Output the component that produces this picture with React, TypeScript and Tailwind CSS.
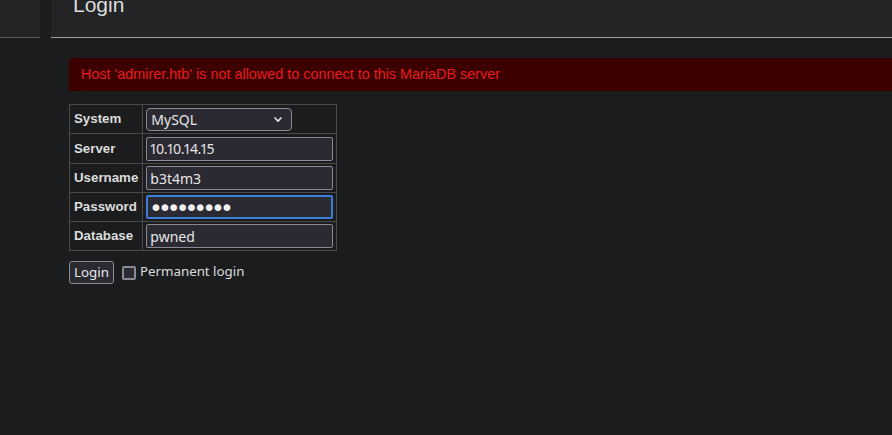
const rows: { label: string; value: string; focus?: boolean; tall?: boolean }[] = [
  { label: "Server", value: "10.10.14.15", tall: true },
  { label: "Username", value: "b3t4m3" },
  { label: "Password", value: "●●●●●●●●●", focus: true },
  { label: "Database", value: "pwned" },
];

const inputFont = { fontFamily: '"Noto Sans", "Open Sans", sans-serif' };

export default function App() {
  return (
    <div className="min-h-[435px] w-full bg-[#1b1c1e] text-[#dcdcdc]" style={{ fontFamily: '"Liberation Sans", Arial, sans-serif' }}>
      <div className="flex h-[38px]">
        <div className="w-[40px] bg-[#232426] border-b border-[#5a5a5a]" />
        <div className="w-[11px]" />
        <div className="flex-1 bg-[#232426] border-b border-[#a09d96] pl-[22px]">
          <h2 className="text-[21px] leading-none text-[#dcdcdc] -mt-[6px]">Login</h2>
        </div>
      </div>

      <div className="pl-[69px] pt-[20px]">
        <div className="h-[33px] bg-[#3d0000] flex items-center pl-[12px] text-[14.4px] text-[#e81c1c]">
          Host 'admirer.htb' is not allowed to connect to this MariaDB server
        </div>

        <table className="mt-[13px] border-collapse border border-[#4a4a4a] text-[13.3px]">
          <tbody>
            <tr className="h-[29px]">
              <th className="border border-[#4a4a4a] text-left font-bold px-[4px] w-[72px]">System</th>
              <td className="border border-[#4a4a4a] px-[3px] w-[194px]">
                <div
                  className="flex items-center justify-between w-[146px] h-[23px] rounded-[4px] border border-[#8a8a92] bg-[#2b2a33] pl-[4px] pr-[8px] text-[14px] text-[#e6e6e6]"
                  style={inputFont}
                >
                  <span>MySQL</span>
                  <svg width="10" height="7" viewBox="0 0 10 7" fill="none">
                    <path d="M1.5 1.5 L5 5 L8.5 1.5" stroke="#e6e6e6" strokeWidth="1.6" />
                  </svg>
                </div>
              </td>
            </tr>
            {rows.map((r) => (
              <tr key={r.label} className={r.tall ? "h-[30px]" : "h-[29px]"}>
                <th className="border border-[#4a4a4a] text-left font-bold px-[4px]">{r.label}</th>
                <td className="border border-[#4a4a4a] px-[3px]">
                  <div
                    className={
                      r.focus
                        ? "flex items-center w-[187px] h-[24px] rounded-[2px] border-2 border-[#3a7dd6] bg-[#2b2a33] pl-[3px] text-[14px] text-[#f2f2f2]"
                        : "flex items-center w-[187px] h-[24px] rounded-[2px] border border-[#8a8a92] bg-[#2b2a33] pl-[3px] text-[14px] text-[#e6e6e6] proportional-nums"
                    }
                    style={inputFont}
                  >
                    {r.focus ? (
                      <span className="text-[15.5px] tracking-[-0.5px] leading-none">{r.value}</span>
                    ) : r.label === "Server" ? (
                      <span className="tracking-[-0.4px]">{r.value}</span>
                    ) : (
                      r.value
                    )}
                  </div>
                </td>
              </tr>
            ))}
          </tbody>
        </table>

        <div className="flex items-center mt-[10px] text-[13.3px]" style={inputFont}>
          <button className="h-[23px] w-[45px] rounded-[3px] border border-[#8a8a92] bg-[#2b2a33] text-[#e6e6e6] leading-none">
            Login
          </button>
          <span className="ml-[8px] w-[14px] h-[14px] rounded-[2px] border-2 border-[#8a8a92] bg-[#2b2a33]" />
          <span className="ml-[4px] text-[#dcdcdc] -mt-[2px]">Permanent login</span>
        </div>
      </div>
    </div>
  );
}
